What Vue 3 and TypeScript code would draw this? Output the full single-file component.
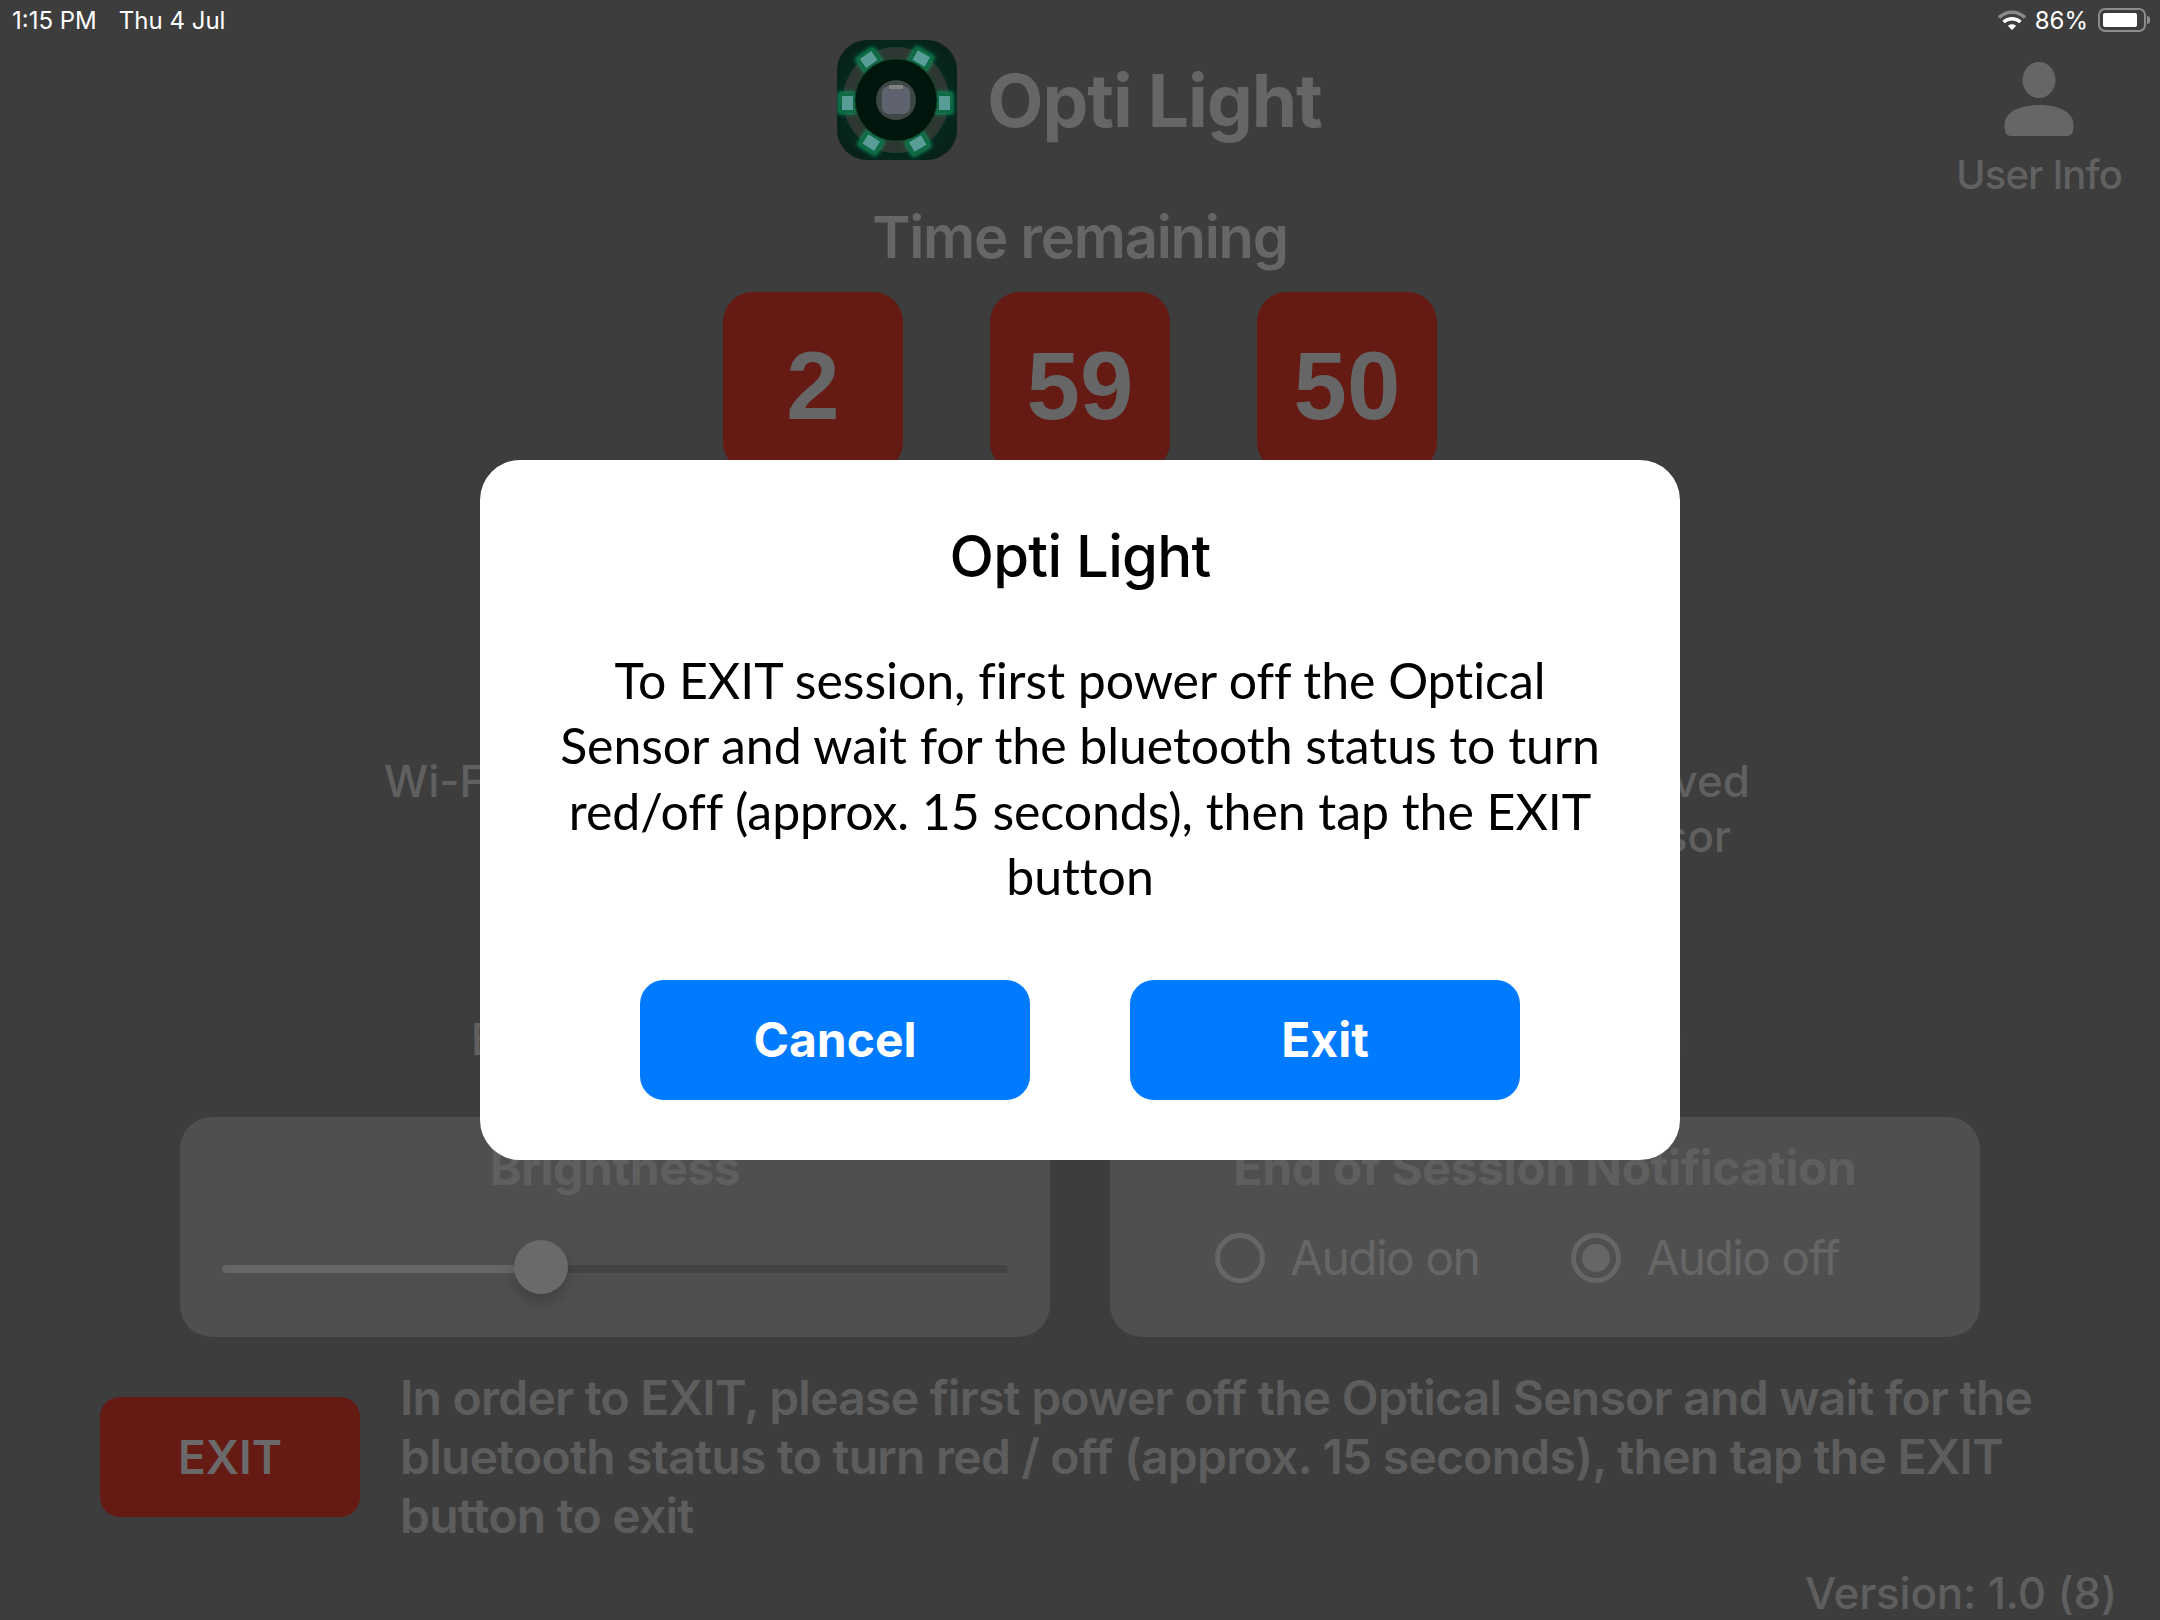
<script setup lang="ts">
const tiles = ['2', '59', '50']

const leds = [
  { x: 32, y: 20, a: -35 },
  { x: 84, y: 19, a: 30 },
  { x: 10, y: 63, a: 90 },
  { x: 107, y: 63, a: 90 },
  { x: 34, y: 103, a: 32 },
  { x: 81, y: 104, a: -30 },
]
</script>

<template>
  <div class="page">
    <div class="status-bar">
      <div class="status-left">
        <span>1:15 PM</span>
        <span>Thu 4 Jul</span>
      </div>
      <div class="status-right">
        <svg class="wifi" width="28" height="22" viewBox="0 0 28 22">
          <path d="M1 8.5C8.5 1.5 19.5 1.5 27 8.5" fill="none" stroke="#8a8a8a" stroke-width="3.4" />
          <path d="M5.5 13C10.5 8.6 17.5 8.6 22.5 13" fill="none" stroke="#fff" stroke-width="3.4" />
          <path d="M9.8 16.8C12.2 14.6 15.8 14.6 18.2 16.8L14 21Z" fill="#fff" />
        </svg>
        <span>86%</span>
        <div class="battery">
          <div class="battery-level"></div>
        </div>
        <div class="battery-nub"></div>
      </div>
    </div>

    <header class="header">
      <div></div>
      <div class="brand">
        <svg class="logo" width="120" height="120" viewBox="0 0 120 120">
          <defs>
            <clipPath id="logo-clip">
              <rect width="120" height="120" rx="30" />
            </clipPath>
            <radialGradient id="logo-bg" cx="50%" cy="50%" r="72%">
              <stop offset="0.55" stop-color="#062a20" />
              <stop offset="0.8" stop-color="#07211a" />
              <stop offset="1" stop-color="#2a3526" />
            </radialGradient>
            <filter id="led-glow" x="-80%" y="-80%" width="260%" height="260%">
              <feGaussianBlur stdDeviation="2.2" />
            </filter>
            <filter id="logo-soft" x="-5%" y="-5%" width="110%" height="110%">
              <feGaussianBlur stdDeviation="0.6" />
            </filter>
          </defs>
          <g clip-path="url(#logo-clip)">
            <rect width="120" height="120" fill="url(#logo-bg)" />
            <g filter="url(#logo-soft)">
              <circle cx="59" cy="60" r="53" fill="#2e3832" />
              <g v-for="(led, i) in leds" :key="i" :transform="`translate(${led.x} ${led.y}) rotate(${led.a})`">
                <rect x="-11" y="-9" width="22" height="18" fill="#0c9a5e" filter="url(#led-glow)" />
                <rect x="-10" y="-8" width="20" height="16" fill="#0a6a44" />
                <rect x="-7" y="-6" width="14" height="11" fill="#5a9c96" />
              </g>
              <circle cx="59" cy="60" r="41" fill="#04150e" stroke="#083f26" stroke-width="1" />
              <circle cx="59" cy="60" r="20" fill="#3d4644" />
              <rect x="45" y="46" width="28" height="28" rx="7" fill="#5e6470" />
              <rect x="52" y="45" width="14" height="4" fill="#82857f" />
            </g>
          </g>
        </svg>
        <span class="brand-name">Opti Light</span>
      </div>
      <div class="user-info">
        <svg width="70" height="76" viewBox="0 0 70 76">
          <ellipse cx="35" cy="18" rx="16.5" ry="18" fill="#666" />
          <path d="M0.5 63C0.5 50 15 43 35 43S69.5 50 69.5 63C69.5 70 68 74 63 74H7C2 74 0.5 70 0.5 63Z" fill="#666" />
        </svg>
        <span>User Info</span>
      </div>
    </header>

    <div class="time-label">Time remaining</div>
    <div class="tiles">
      <div v-for="t in tiles" :key="t" class="tile">{{ t }}</div>
    </div>

    <div class="status-row first">
      <span>Wi-Fi connected</span>
      <span class="saved">Data Saved<br />to Sensor</span>
    </div>
    <div class="status-row second">
      <span>Bluetooth status</span>
      <span>Sensor connection</span>
    </div>

    <div class="panels">
      <section class="panel">
        <h2>Brightness</h2>
        <div class="slider">
          <div class="slider-fill"></div>
          <div class="slider-thumb"></div>
        </div>
      </section>
      <section class="panel">
        <h2>End of Session Notification</h2>
        <div class="radios">
          <label class="radio"><span class="radio-mark"></span>Audio on</label>
          <label class="radio"><span class="radio-mark checked"></span>Audio off</label>
        </div>
      </section>
    </div>

    <div class="exit-row">
      <button class="exit-button">EXIT</button>
      <p>In order to EXIT, please first power off the Optical Sensor and wait for the bluetooth status to turn red / off (approx. 15 seconds), then tap the EXIT button to exit</p>
    </div>

    <div class="version">Version: 1.0 (8)</div>

    <div class="modal">
      <h1>Opti Light</h1>
      <p>To EXIT session, first power off the Optical Sensor and wait for the bluetooth status to turn red/off (approx. 15 seconds), then tap the EXIT button</p>
      <div class="modal-actions">
        <button>Cancel</button>
        <button>Exit</button>
      </div>
    </div>
  </div>
</template>

<style>
html,
body {
  margin: 0;
  background: #3d3d3d;
}
</style>

<style scoped>
.page {
  position: relative;
  width: 2160px;
  height: 1620px;
  overflow: hidden;
  background: #3d3d3d;
  color: #666;
  font-family: Inter, "Liberation Sans", sans-serif;
}

.status-bar {
  display: flex;
  justify-content: space-between;
  align-items: center;
  height: 40px;
  padding: 0 10px 0 12px;
  color: #fff;
  font-size: 24px;
}

.status-left {
  display: flex;
  gap: 22px;
}

.status-right {
  display: flex;
  align-items: center;
}

.wifi {
  margin-right: 9px;
}

.battery {
  box-sizing: border-box;
  width: 48px;
  height: 24px;
  margin-left: 10px;
  padding: 3px;
  border: 2px solid #8c8c8c;
  border-radius: 7px;
}

.battery-level {
  width: 34px;
  height: 14px;
  background: #fff;
  border-radius: 2px;
}

.battery-nub {
  width: 3px;
  height: 8px;
  margin-left: 1px;
  background: #8c8c8c;
  border-radius: 0 3px 3px 0;
}

.header {
  display: grid;
  grid-template-columns: 1fr auto 1fr;
  grid-template-rows: 120px;
  height: 120px;
}

.brand {
  display: flex;
  align-items: center;
  gap: 30px;
  margin-left: -1px;
}

.brand-name {
  font-size: 73px;
  font-weight: 700;
  letter-spacing: -1.1px;
}

.user-info {
  display: flex;
  flex-direction: column;
  align-items: center;
  align-self: start;
  justify-self: end;
  margin: 22px 38px 0 0;
  color: #616161;
  font-size: 40px;
  font-weight: 500;
  letter-spacing: -0.9px;
}

.user-info svg {
  display: block;
  flex: none;
  margin-bottom: 12px;
}

.time-label {
  margin-top: 42px;
  font-size: 58px;
  font-weight: 600;
  letter-spacing: -1.3px;
  line-height: 70px;
  text-align: center;
}

.tiles {
  display: flex;
  justify-content: center;
  gap: 87px;
  margin-top: 20px;
}

.tile {
  box-sizing: border-box;
  display: flex;
  justify-content: center;
  align-items: center;
  width: 180px;
  height: 180px;
  padding-top: 8px;
  background: #651a13;
  border-radius: 30px;
  font-size: 96px;
  font-weight: 700;
  font-family: "Liberation Sans", sans-serif;
}

.status-row {
  display: flex;
  justify-content: space-between;
  color: #606060;
  font-size: 44px;
  font-weight: 500;
  line-height: 55px;
}

.status-row.first {
  margin-top: 282px;
  padding: 0 410px 0 384px;
}

.status-row.second {
  margin-top: 148px;
  padding: 0 477px 0 471px;
}

.saved {
  text-align: center;
}

.panels {
  display: flex;
  gap: 60px;
  margin-top: 50px;
  padding: 0 180px;
}

.panel {
  box-sizing: border-box;
  width: 870px;
  height: 220px;
  padding-top: 27px;
  background: #4f4f4f;
  border-radius: 32px;
}

.panel h2 {
  margin: 0;
  color: #5f5f5f;
  font-size: 48px;
  font-weight: 700;
  letter-spacing: -0.4px;
  line-height: 48px;
  text-align: center;
}

.slider {
  position: relative;
  height: 8px;
  margin: 73px 42px 0;
  background: #434343;
  border-radius: 4px;
}

.slider-fill {
  width: 320px;
  height: 100%;
  background: #666;
  border-radius: 4px;
}

.slider-thumb {
  position: absolute;
  top: -25px;
  left: 292px;
  width: 54px;
  height: 54px;
  background: #6a6a6a;
  border-radius: 50%;
  box-shadow: 0 8px 14px rgba(0, 0, 0, 0.18);
}

.radios {
  display: flex;
  gap: 92px;
  margin: 37px 0 0 105px;
}

.radio {
  display: flex;
  align-items: center;
  gap: 25px;
  color: #666;
  font-size: 48px;
  font-weight: 400;
  letter-spacing: -1.6px;
  line-height: 58px;
}

.radio-mark {
  box-sizing: border-box;
  display: flex;
  justify-content: center;
  align-items: center;
  width: 50px;
  height: 50px;
  border: 5px solid #666;
  border-radius: 50%;
}

.radio-mark.checked::after {
  content: "";
  width: 28px;
  height: 28px;
  background: #666;
  border-radius: 50%;
}

.exit-row {
  display: flex;
  align-items: center;
  gap: 40px;
  margin-top: 31px;
  padding: 0 44px 0 100px;
}

.exit-button {
  flex: none;
  width: 260px;
  height: 120px;
  padding: 0;
  background: #651a13;
  border: none;
  border-radius: 20px;
  color: #6a6a6a;
  font: 600 46px Inter, sans-serif;
}

.exit-row p {
  margin: 0;
  color: #5d5d5d;
  font-size: 48px;
  font-weight: 600;
  letter-spacing: -0.75px;
  line-height: 59px;
}

.version {
  margin-top: 23px;
  padding-right: 43px;
  color: #5f5f5f;
  font-size: 44px;
  font-weight: 500;
  letter-spacing: -0.2px;
  line-height: 50px;
  text-align: right;
}

.modal {
  position: absolute;
  top: 460px;
  left: 480px;
  box-sizing: border-box;
  width: 1200px;
  height: 700px;
  padding-top: 58px;
  background: #fff;
  border-radius: 40px;
  color: #000;
  text-align: center;
}

.modal h1 {
  margin: 0;
  font-size: 58px;
  font-weight: 500;
  letter-spacing: -0.7px;
  line-height: 76px;
}

.modal p {
  margin: 54px 0 0;
  padding: 0 60px;
  font-family: Lato, "Noto Sans", sans-serif;
  font-size: 50px;
  font-variant-ligatures: none;
  letter-spacing: -0.05px;
  line-height: 65.4px;
}

.modal-actions {
  display: flex;
  justify-content: center;
  gap: 100px;
  margin-top: 70px;
}

.modal-actions button {
  width: 390px;
  height: 120px;
  padding: 0;
  background: #007aff;
  border: none;
  border-radius: 24px;
  color: #fff;
  font: 700 48px Inter, sans-serif;
}
</style>
